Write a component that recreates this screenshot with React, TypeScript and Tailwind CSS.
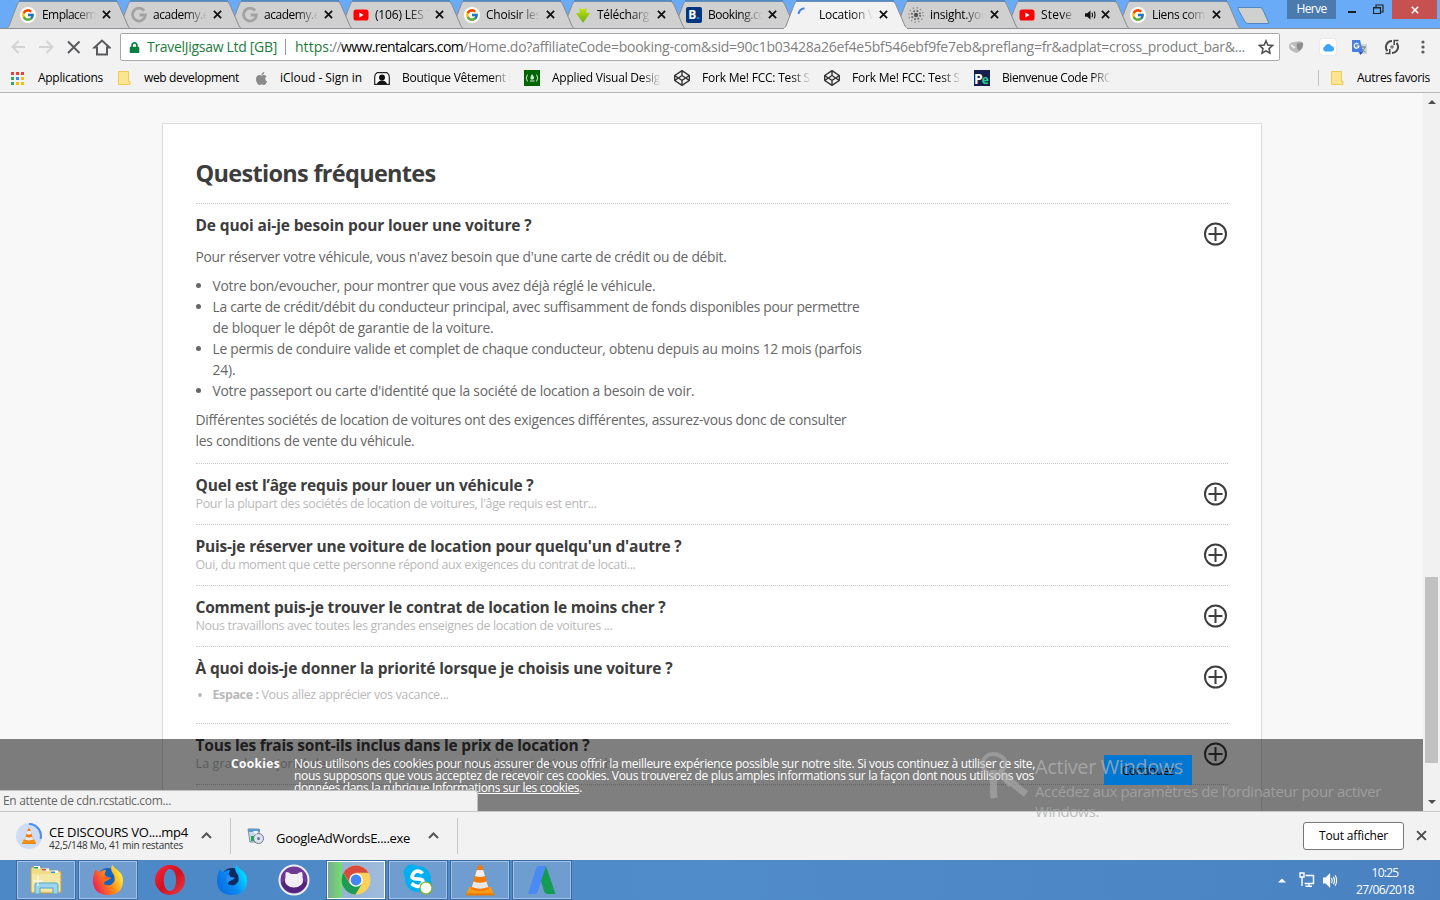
import { useLayoutEffect, useRef, type ReactNode } from "react";
import { FcGoogle } from "react-icons/fc";
import { FaApple, FaCodepen, FaLock } from "react-icons/fa";

/** A single line of text, tracked so that it fills exactly `w` pixels. */
function Line({ w, className = "", children }: { w: number; className?: string; children: ReactNode }) {
  const ref = useRef<HTMLSpanElement>(null);
  useLayoutEffect(() => {
    const el = ref.current;
    if (!el) return;
    el.style.letterSpacing = "0px";
    const natural = el.getBoundingClientRect().width;
    const count = (el.textContent ?? "").length;
    el.style.letterSpacing = `${(w - natural) / count}px`;
  }, [w]);
  return (
    <span className={`block ${className}`}>
      <span ref={ref} className="inline-block whitespace-pre">
        {children}
      </span>
    </span>
  );
}

function Cross({ size = 9, color = "#111", width = 2 }: { size?: number; color?: string; width?: number }) {
  return (
    <svg width={size} height={size} viewBox="0 0 10 10" stroke={color} strokeWidth={width} fill="none">
      <path d="M1 1 9 9M9 1 1 9" />
    </svg>
  );
}

const GoogleIcon = () => (
  <span className="flex size-4 items-center justify-center rounded-full bg-white">
    <FcGoogle size={14} />
  </span>
);

const GreyG = () => (
  <svg width="16" height="16" viewBox="0 0 16 16" fill="none" stroke="#a2a2a2" strokeWidth="2.8">
    <path d="M13 3.6A6.4 6.4 0 1 0 14.4 8H8.5" />
  </svg>
);

const YouTube = () => (
  <svg width="16" height="16" viewBox="0 0 16 16">
    <rect x="0.5" y="2.5" width="15" height="11" rx="2.6" fill="#f00" />
    <path d="M6.4 5.6v4.8L10.6 8z" fill="#fff" />
  </svg>
);

const GreenArrow = () => (
  <svg width="16" height="16" viewBox="0 0 16 16">
    <defs>
      <linearGradient id="ga" x1="0" y1="0" x2="0" y2="1">
        <stop offset="0" stopColor="#c2e418" />
        <stop offset="1" stopColor="#6fae0c" />
      </linearGradient>
    </defs>
    <path d="M4.500 1h1.500v1h4V1h1.500v5h3.700L8 15.800.8 6h3.700z" fill="url(#ga)" />
  </svg>
);

const Booking = () => (
  <span className="flex size-4 items-center justify-center rounded-[2px] bg-[#003580] text-[12px] leading-none font-bold text-white">
    B<span className="text-[#00a2e8]">.</span>
  </span>
);

const Spinner = () => (
  <svg width="16" height="16" viewBox="0 0 16 16" fill="none" stroke="#4285f4" strokeWidth="2">
    <path d="M1.5 7A7 7 0 0 1 7.500 1.200" />
  </svg>
);

const Insight = () => (
  <svg width="16" height="16" viewBox="0 0 16 16" fill="#777">
    <circle cx="8" cy="8" r="2.200" fill="#555" />
    <circle cx="8" cy="8" r="4.200" fill="none" stroke="#6f6f6f" strokeWidth="2" strokeDasharray="1.700 1.600" />
    <circle cx="8" cy="8" r="7.200" fill="none" stroke="#909090" strokeWidth="1.400" strokeDasharray="1.400 2.400" />
  </svg>
);

const Speaker = () => (
  <svg width="11" height="10" viewBox="0 0 12 11" fill="#111">
    <path d="M0 3.500h2.500L6 .5v10l-3.500-3H0z" />
    <path d="M7.500 3q1.500 2.500 0 5M10 1.700q2 3.800 0 7.600" fill="none" stroke="#111" strokeWidth="1.200" />
  </svg>
);

type TabData = { icon: ReactNode; title: string; w: number; active?: boolean; z: string; audio?: boolean };

const tabs: TabData[] = [
  { icon: <GoogleIcon />, title: "Emplacem", w: 54, z: "z-[10]" },
  { icon: <GreyG />, title: "academy.e", w: 56, z: "z-[9]" },
  { icon: <GreyG />, title: "academy.e", w: 56, z: "z-[8]" },
  { icon: <YouTube />, title: "(106) LES T", w: 58, z: "z-[7]" },
  { icon: <GoogleIcon />, title: "Choisir les", w: 55, z: "z-[6]" },
  { icon: <GreenArrow />, title: "Télécharg", w: 52, z: "z-[5]" },
  { icon: <Booking />, title: "Booking.co", w: 57, z: "z-[4]" },
  { icon: <Spinner />, title: "Location V", w: 56, active: true, z: "z-[20]" },
  { icon: <Insight />, title: "insight.you", w: 58, z: "z-[3]" },
  { icon: <YouTube />, title: "Steve J", w: 38, z: "z-[2]", audio: true },
  { icon: <GoogleIcon />, title: "Liens com", w: 53, z: "z-[1]" },
];

function Tab({ tab }: { tab: TabData }) {
  return (
    <div className={`relative -mr-3 h-[29px] w-[123px] shrink-0 ${tab.z}`}>
      <svg className="absolute inset-0" width="123" height="29" viewBox="0 0 123 29">
        <path
          d="M0 28.500 2 26 10 5Q11.500 1 13 1H108Q110.500 1 112 5L121 26 123 28.500Z"
          fill={tab.active ? "#f2f2f2" : "#d0d0d0"}
          stroke="#8a8d91"
          strokeWidth="1"
        />
        <path d="M12 1H110" stroke="#4a83bf" strokeWidth="1.500" />
        {tab.active && <path d="M0 28.500H123" stroke="#f2f2f2" strokeWidth="1.500" />}
      </svg>
      <div className="relative flex h-[29px] items-center pl-[13px] pb-px pt-px">
        {tab.icon}
        <div
          className={`ml-[6px] overflow-hidden [mask-image:linear-gradient(to_right,black_60%,transparent)] ${
            tab.audio ? "w-[34px]" : "w-[54px]"
          }`}
        >
          <Line w={tab.w}>{tab.title}</Line>
        </div>
        {tab.audio && (
          <span className="ml-[10px] flex w-[11px]">
            <Speaker />
          </span>
        )}
        <span className={tab.audio ? "ml-[5px]" : "ml-[6px]"}>
          <Cross />
        </span>
      </div>
    </div>
  );
}

function TabStrip() {
  return (
    <div className="relative flex h-[29px] border-b border-[#8a8d91] bg-[#6aabf7] pl-[7px] text-[12px]">
      {tabs.map((t, i) => (
        <Tab key={i} tab={t} />
      ))}
      <svg className="mt-[6px] ml-[8px] shrink-0" width="36" height="19" viewBox="0 0 36 19">
        <path d="M2 1.500H24Q26 1.500 27 4L33 17.500H12Q9.500 17.500 8.500 15L2 3Z" fill="#d0d0d0" stroke="#5288bf" />
      </svg>
      <div className="absolute top-0 right-[3px] flex h-[19px] items-center">
        <span className="flex h-[19px] w-[49px] items-center justify-center bg-[#4b7bae] pb-px text-white">
          <Line w={30}>Herve</Line>
        </span>
        <span className="ml-[12px] mt-[5px] h-[2px] w-[8px] bg-[#1d1d1d]" />
        <svg className="ml-[17px]" width="11" height="11" viewBox="0 0 11 11" fill="none" stroke="#222">
          <path d="M.5 3.500H7.500V9.500H.5ZM.5 4H7.500M3 3V1H10V8H8" strokeWidth="1.200" />
        </svg>
        <span className="ml-[8px] flex h-[19px] w-[45px] items-center justify-center bg-[#c75050]">
          <Cross size={8} color="#fff" width={2} />
        </span>
      </div>
    </div>
  );
}

function Toolbar() {
  return (
    <div className="flex h-[35px] items-center pt-px pl-[11px]">
      <svg width="100" height="18" viewBox="0 0 100 18" fill="none" strokeWidth="2" className="shrink-0">
        <path d="M14 9H1.500M7.500 3 1.500 9 7.500 15" stroke="#d3d3d5" />
        <path d="M28 9H41M35.500 3 41.500 9 35.500 15" stroke="#d3d3d5" />
        <path d="M57 3.500 68.500 15M68.500 3.500 57 15" stroke="#5a5a5e" />
        <path d="M83.500 9.500 91 2.500 98.500 9.500H96V16.500H86V9.500Z" stroke="#5a5a5e" />
      </svg>
      <div className="ml-[9px] flex h-[28px] w-[1160px] shrink-0 items-center rounded-[2px] border border-[#a9a9a9] bg-white pl-[8px] text-[14px] leading-[26px]">
        <FaLock size={11} className="text-[#0b8043]" />
        <Line w={130} className="ml-[7px] text-[#1c7c3c]">
          TravelJigsaw Ltd [GB]
        </Line>
        <span className="ml-[8px] mr-[9px] h-[16px] w-px bg-[#999]" />
        <Line w={34} className="text-[#1c7c3c]">
          https
        </Line>
        <Line w={12} className="text-[#808080]">
          ://
        </Line>
        <Line w={122} className="text-black">
          www.rentalcars.com
        </Line>
        <Line w={782} className="text-[#808080]">
          /Home.do?affiliateCode=booking-com&sid=90c1b03428a26ef4e5bf546ebf9fe7eb&preflang=fr&adplat=cross_product_bar&...
        </Line>
        <svg className="ml-[13px] shrink-0" width="16" height="16" viewBox="0 0 16 16" fill="none" stroke="#4b4b4f" strokeWidth="1.500">
          <path d="M8 1.800 9.800 6.100 14.500 6.500 11 9.600 12 14.200 8 11.800 4 14.200 5 9.600 1.500 6.500 6.200 6.100Z" />
        </svg>
      </div>
      <svg className="ml-[8px] shrink-0" width="17" height="16" viewBox="0 0 17 16">
        <path d="M1 6Q3 2.500 7 3 11 1.500 15 3.500 16.500 8 12 12L9 14Q3 12.500 1 9Z" fill="#bcbcbc" />
        <path d="M9 4.500Q13 2.500 15 4.500 15 9 11 12 8 9 9 4.500" fill="#8d8d8d" />
        <path d="M3 6 7 9" stroke="#ececec" strokeWidth="2" />
      </svg>
      <span className="ml-[15px] flex size-[16px] shrink-0 items-center justify-center rounded-[2px] bg-white shadow-[0_0_1px_#aaa]">
        <svg width="13" height="9" viewBox="0 0 13 9">
          <path d="M3 8.500a2.700 2.700 0 0 1-.3-5A3.800 3.800 0 0 1 9.600 3 2.800 2.800 0 0 1 10 8.500Z" fill="#3fa5f8" />
        </svg>
      </span>
      <svg className="ml-[15px] shrink-0" width="17" height="17" viewBox="0 0 17 17">
        <rect x="7" y="5" width="9" height="10" fill="#d5d5d5" />
        <path d="M9 8h6M12 7v1.500M14 8q-1 4-4 5M10.500 9.500q1 2.500 4 3.500" stroke="#6c8290" fill="none" />
        <path d="M1 1h8l3 12H2a1 1 0 0 1-1-1Z" fill="#4a7fe0" />
        <path d="m8 13 4 0-2.500 3Z" fill="#2c50ae" />
        <path d="M7.400 5.200A2.400 2.400 0 1 0 8 7H5.700" stroke="#fff" fill="none" strokeWidth="1.200" />
      </svg>
      <svg className="ml-[16px] shrink-0" width="16" height="16" viewBox="0 0 16 16" fill="none" stroke="#48484c" strokeWidth="2">
        <path d="M8 2A6 6 0 0 0 3.500 12M8 14A6 6 0 0 0 12.500 4" />
        <path d="M5.800 10V14.500H1.500M10.200 6V1.500H14.500" strokeWidth="1.500" />
        <circle cx="8" cy="8" r="1.800" fill="#777" stroke="none" />
      </svg>
      <svg className="ml-[21px] shrink-0" width="4" height="14" viewBox="0 0 4 14" fill="#5a5a5e">
        <circle cx="2" cy="2" r="1.600" />
        <circle cx="2" cy="7" r="1.600" />
        <circle cx="2" cy="12" r="1.600" />
      </svg>
    </div>
  );
}

const AppsGrid = () => (
  <svg width="13" height="13" viewBox="0 0 13 13">
    {["#ea4335", "#ea4335", "#ea4335", "#34a853", "#4285f4", "#fbbc05", "#34a853", "#fbbc05", "#fbbc05"].map((c, i) => (
      <rect key={i} x={(i % 3) * 5} y={Math.floor(i / 3) * 5} width="3" height="3" fill={c} />
    ))}
  </svg>
);

const Folder = () => (
  <svg width="13" height="15" viewBox="0 0 13 15">
    <path d="M.5.5H10.500V10.500H12V13.500H.5Z" fill="#ffe48f" stroke="#efca58" />
  </svg>
);

const Person = () => (
  <svg width="16" height="13" viewBox="0 0 16 13">
    <path d="M3 .7H13Q15.300 2 15.300 5V12.300H.7V5Q.7 2 3 .7Z" fill="#fff" stroke="#222" strokeWidth="1.200" />
    <circle cx="8" cy="5.500" r="3" fill="#111" />
    <path d="M3 12Q4 8.500 8 8.500T13 12Z" fill="#111" />
  </svg>
);

const CodeCamp = () => (
  <svg width="16" height="16" viewBox="0 0 16 16" fill="none" stroke="#cfe6cf">
    <rect width="16" height="16" fill="#006400" stroke="none" />
    <path d="M3.500 4.500Q1 8 3.500 11.500M12.500 4.500Q15 8 12.500 11.500M6 11H10.500" />
    <path d="M8 4Q10.500 7 10 8.500L9 9.500H7Q5.500 8 8 4Z" fill="#cfe6cf" stroke="none" />
  </svg>
);

const Pe = () => (
  <span className="flex size-4 items-end overflow-hidden bg-[#17204d] text-[14px] leading-[15px] font-bold text-white">
    P<span className="-ml-px text-[12px] leading-[12px] text-[#23d18b]">e</span>
  </span>
);

const Pen = () => <FaCodepen size={16} color="#333" />;

const bookmarks: { icon: ReactNode; label: string; w: number; slot: string; gap: string; fade?: boolean }[] = [
  { icon: <AppsGrid />, label: "Applications", w: 65, slot: "w-[107px]", gap: "w-[27px]" },
  { icon: <Folder />, label: "web development", w: 95, slot: "w-[136px]", gap: "w-[26px]" },
  { icon: <FaApple size={15} color="#8b8b8b" />, label: "iCloud - Sign in", w: 82, slot: "w-[120px]", gap: "w-[26px]" },
  { icon: <Person />, label: "Boutique Vêtement E", w: 113, slot: "w-[150px]", gap: "w-[28px]", fade: true },
  { icon: <CodeCamp />, label: "Applied Visual Desig", w: 108, slot: "w-[150px]", gap: "w-[28px]", fade: true },
  { icon: <Pen />, label: "Fork Me! FCC: Test S", w: 108, slot: "w-[150px]", gap: "w-[28px]", fade: true },
  { icon: <Pen />, label: "Fork Me! FCC: Test S", w: 108, slot: "w-[150px]", gap: "w-[28px]", fade: true },
  { icon: <Pe />, label: "Bienvenue Code PRO", w: 111, slot: "w-[150px]", gap: "w-[28px]", fade: true },
];

function Bookmarks() {
  return (
    <div className="flex h-[29px] items-center border-b border-[#b6b6b6] pl-[11px] text-[12px] text-black">
      {bookmarks.map((b, i) => (
        <div key={i} className={`flex shrink-0 items-center ${b.slot}`}>
          <span className={`flex shrink-0 ${b.gap}`}>{b.icon}</span>
          <div
            className={
              b.fade
                ? "w-[109px] overflow-hidden [mask-image:linear-gradient(to_right,black_82%,transparent)]"
                : ""
            }
          >
            <Line w={b.w}>{b.label}</Line>
          </div>
        </div>
      ))}
      <span className="ml-auto h-[16px] w-px bg-[#c4c4c4]" />
      <span className="mr-[13px] ml-[12px]">
        <Folder />
      </span>
      <Line w={73} className="mr-[10px]">
        Autres favoris
      </Line>
    </div>
  );
}

const Plus = () => (
  <svg className="mt-[18px] ml-auto shrink-0" width="25" height="24" viewBox="0 0 25 24" fill="none" stroke="#3d3d3d" strokeWidth="2">
    <circle cx="12.500" cy="12" r="10.500" />
    <path d="M12.500 5V19M5.500 12H19.500" />
  </svg>
);

function Question({ title, w, children }: { title: string; w: number; children: ReactNode }) {
  return (
    <section className="flex border-t border-dotted border-[#c8c8c8]">
      <div className="-ml-[0.5px] pt-[10px]">
        <h2 className="text-[15.500px] leading-[22px] font-bold text-[#3d3d3d]">
          <Line w={w}>{title}</Line>
        </h2>
        {children}
      </div>
      <Plus />
    </section>
  );
}

function Teaser({ w, children }: { w: number; children: string }) {
  return (
    <p className="-mt-px mb-[11px] text-[12.500px] leading-[18px] text-[#b9b9b9]">
      <Line w={w}>{children}</Line>
    </p>
  );
}

function Faq() {
  return (
    <div className="mt-[30px] ml-[162px] h-[900px] w-[1100px] border border-[#ddd] bg-white pt-[32px] pr-[33px] pl-[33px]">
      <h1 className="-ml-[0.5px] h-[47px] text-[23.500px] leading-[34px] font-bold text-[#3d3d3d]">
        <Line w={240}>Questions fréquentes</Line>
      </h1>
      <Question w={336} title="De quoi ai-je besoin pour louer une voiture ?">
        <div className="pt-[10px] pb-[12px] text-[13.800px] leading-[21px] text-[#666]">
          <Line w={531}>Pour réserver votre véhicule, vous n'avez besoin que d'une carte de crédit ou de débit.</Line>
          <ul className="my-[8px] list-disc pl-[17px]">
            <li>
              <Line w={443}>Votre bon/evoucher, pour montrer que vous avez déjà réglé le véhicule.</Line>
            </li>
            <li>
              <Line w={647}>La carte de crédit/débit du conducteur principal, avec suffisamment de fonds disponibles pour permettre</Line>
              <Line w={281}>de bloquer le dépôt de garantie de la voiture.</Line>
            </li>
            <li>
              <Line w={649}>Le permis de conduire valide et complet de chaque conducteur, obtenu depuis au moins 12 mois (parfois</Line>
              <Line w={23}>24).</Line>
            </li>
            <li>
              <Line w={482}>Votre passeport ou carte d'identité que la société de location a besoin de voir.</Line>
            </li>
          </ul>
          <Line w={651}>Différentes sociétés de location de voitures ont des exigences différentes, assurez-vous donc de consulter</Line>
          <Line w={219}>les conditions de vente du véhicule.</Line>
        </div>
      </Question>
      <Question w={338} title="Quel est l’âge requis pour louer un véhicule ?">
        <Teaser w={401}>Pour la plupart des sociétés de location de voitures, l'âge requis est entr...</Teaser>
      </Question>
      <Question w={486} title="Puis-je réserver une voiture de location pour quelqu'un d'autre ?">
        <Teaser w={440}>Oui, du moment que cette personne répond aux exigences du contrat de locati...</Teaser>
      </Question>
      <Question w={470} title="Comment puis-je trouver le contrat de location le moins cher ?">
        <Teaser w={417}>Nous travaillons avec toutes les grandes enseignes de location de voitures ...</Teaser>
      </Question>
      <Question w={477} title="À quoi dois-je donner la priorité lorsque je choisis une voiture ?">
        <ul className="mt-[7px] mb-[19px] list-disc pl-[17px] text-[12.500px] leading-[18px] text-[#b9b9b9]">
          <li>
            <span className="flex">
              <Line w={49} className="font-bold">
                {"Espace : "}
              </Line>
              <Line w={187}>Vous allez apprécier vos vacance...</Line>
            </span>
          </li>
        </ul>
      </Question>
      <Question w={394} title="Tous les frais sont-ils inclus dans le prix de location ?">
        <Teaser w={427}>La grande majorité de nos locations comprennent la protection vol, ch...</Teaser>
      </Question>
      <div className="border-t border-dotted border-[#c8c8c8]" />
    </div>
  );
}

function CookieBar() {
  return (
    <div className="absolute right-0 bottom-0 left-0 flex h-[72px] bg-black/50 pt-[19px] pl-[231px] text-[12px] leading-[12px] text-white">
      <Line w={49} className="font-bold">
        Cookies
      </Line>
      <p className="ml-[14px] w-[810px] font-medium">
        <Line w={741}>Nous utilisons des cookies pour nous assurer de vous offrir la meilleure expérience possible sur notre site. Si vous continuez à utiliser ce site,</Line>
        <Line w={740}>nous supposons que vous acceptez de recevoir ces cookies. Vous trouverez de plus amples informations sur la façon dont nous utilisons vos</Line>
        <Line w={288}>
          données dans la rubrique <u>Informations sur les cookies</u>.
        </Line>
      </p>
      <button className="-mt-[3px] flex h-[30px] w-[88px] items-center justify-center bg-[#0077d2] pt-[2px] text-black">
        <Line w={52}>Continuez</Line>
      </button>
    </div>
  );
}

function Page() {
  return (
    <div className="relative flex h-[718px]">
      <main className="relative w-[1423px] overflow-hidden bg-[#f8f8f8]">
        <Faq />
        <CookieBar />
      </main>
      <div className="flex w-[17px] flex-col items-center bg-[#f1f1f1] py-[7px]">
        <svg width="8" height="4" viewBox="0 0 8 4" fill="#505050">
          <path d="M0 4 4 0 8 4Z" />
        </svg>
        <span className="mt-[473px] mb-auto h-[186px] w-[13px] bg-[#c1c1c1]" />
        <svg width="8" height="4" viewBox="0 0 8 4" fill="#505050">
          <path d="M0 0 4 4 8 0Z" />
        </svg>
      </div>
      <div className="absolute bottom-0 left-0 h-[21px] w-[478px] rounded-tr-[3px] border-t border-r border-[#c0c0c0] bg-[#f2f2f2] pl-[3px] text-[12px] leading-[20px] text-[#666]">
        <Line w={168}>En attente de cdn.rcstatic.com...</Line>
      </div>
    </div>
  );
}

function Cone({ size }: { size: number }) {
  return (
    <svg width={size} height={size} viewBox="0 0 30 32">
      <path d="M4 23 26 23 29 31H1Z" fill="#f59a16" />
      <path d="M1 29.500H29V31.500H1Z" fill="#e67700" />
      <path d="M13 1.500Q15 .5 17 1.500L24 25Q15 29 6 25Z" fill="#f17a0a" />
      <path d="M11.800 6 18.200 6 20 12Q15 14 10 12Z" fill="#eee" />
      <path d="M8.500 17.500Q15 20 21.500 17.500L23.300 23Q15 26.500 6.800 23Z" fill="#e8e8e8" />
    </svg>
  );
}

const Chevron = () => (
  <svg width="11" height="7" viewBox="0 0 11 7" fill="none" stroke="#555" strokeWidth="2">
    <path d="M1 6 5.500 1.500 10 6" />
  </svg>
);

function Downloads() {
  return (
    <div className="flex h-[49px] items-center border-t border-[#c6c6c6] bg-[#f2f2f2] text-black">
      <span className="relative ml-[16px] flex size-[26px] items-center justify-center rounded-full bg-[#cfddf4]">
        <Cone size={16} />
        <svg className="absolute inset-0" width="26" height="26" viewBox="0 0 26 26" fill="none" stroke="#4a8af4" strokeWidth="2">
          <path d="M13 1A12 12 0 0 1 24.500 16" />
        </svg>
      </span>
      <div className="ml-[7px] w-[152px] pt-[3px]">
        <Line w={139} className="text-[13px] leading-[15px]">
          CE DISCOURS VO....mp4
        </Line>
        <Line w={134} className="text-[10px] leading-[11px] text-[#333]">
          42,5/148 Mo, 41 min restantes
        </Line>
      </div>
      <span className="-mt-px">
        <Chevron />
      </span>
      <span className="ml-[18px] h-[36px] w-px bg-[#c6c6c6]" />
      <svg className="ml-[16px]" width="18" height="18" viewBox="0 0 18 18">
        <path d="M1 2H12V15H3Z" fill="#c9d9ea" stroke="#7890a8" />
        <path d="M1 2H13V5H1Z" fill="#5b9bd0" />
        <circle cx="11.500" cy="11.500" r="5" fill="#dde3ee" stroke="#6b778c" />
        <circle cx="11.500" cy="11.500" r="1.500" fill="#6277a5" />
        <path d="M4 9h3v5H4Z" fill="#2aa455" />
        <path d="M6 4h5L9 8Z" fill="#f5f5f5" />
      </svg>
      <Line w={134} className="ml-[11px] pt-[4px] text-[13px] leading-[18px]">
        GoogleAdWordsE....exe
      </Line>
      <span className="-mt-px ml-[18px]">
        <Chevron />
      </span>
      <span className="ml-[18px] h-[36px] w-px bg-[#c6c6c6]" />
      <button className="ml-auto flex h-[28px] w-[101px] items-center justify-center rounded-[3px] border border-[#777] bg-white pb-px text-[12px]">
        <Line w={69}>Tout afficher</Line>
      </button>
      <span className="mr-[13px] ml-[12px] -mt-[2px]">
        <Cross size={11} color="#4d4d4d" width={1.8} />
      </span>
    </div>
  );
}

const Explorer = () => (
  <svg width="34" height="32" viewBox="0 0 34 32">
    <path d="M2 5Q2 3 4 3H11L13 5H20L22 7H30Q32 7 32 9V27Q32 29 30 29H4Q2 29 2 27Z" fill="#f1dc89" stroke="#c2a54e" />
    <path d="M5 2H11V5H5Z" fill="#fff" />
    <path d="M5 3H9V4.500H5Z" fill="#17a53a" />
    <path d="M13 4.500H20V7H13Z" fill="#fff" />
    <path d="M13 5H17V6.500H13Z" fill="#d6442c" />
    <path d="M22 6.500H29V9H22Z" fill="#fff" />
    <path d="M22 7.500H26V9H22Z" fill="#2d8fd8" />
    <path d="M3 10H31V27H3Z" fill="#f6e7a4" />
    <path d="M6 30V21Q6 19 8 19H27Q29 19 29 21V30H24V24H11V30Z" fill="#9bd6ee" stroke="#58a3c7" />
    <path d="M9 12V22M4 17H14" stroke="#fff" />
  </svg>
);

function Fox({ id, a, b, c, globe, core }: { id: string; a: string; b: string; c: string; globe: string; core: string }) {
  return (
    <svg width="32" height="32" viewBox="0 0 32 32">
      <defs>
        <linearGradient id={id} x1="1" y1="0.100" x2="0" y2="0.600">
          <stop offset="0.150" stopColor={a} />
          <stop offset="0.550" stopColor={b} />
          <stop offset="1" stopColor={c} />
        </linearGradient>
      </defs>
      <circle cx="16" cy="15" r="11" fill={globe} />
      <path
        d="M4 5 7 8.500Q10 5.500 14 6L12.500 10 14.500 13 19 14 15 16.500Q11 17 12 20 18 23.500 22 18 24 13 20 8 18 4 20.500 1 22 4 26 6.500 31.500 11 31 17.500 30 31 16 31 2 30.500 1 18 .8 10 4 5Z"
        fill={`url(#${id})`}
      />
      <path d="M12.500 10 14.500 13 19 14 15 16.500Q12 17 12 20 9 15 12.500 10Z" fill={core} />
    </svg>
  );
}

const Opera = () => (
  <svg width="32" height="32" viewBox="0 0 32 32">
    <defs>
      <linearGradient id="op" x1="0" y1="0" x2="1" y2="1">
        <stop offset="0" stopColor="#ff2739" />
        <stop offset="0.500" stopColor="#d2101f" />
        <stop offset="1" stopColor="#e84045" />
      </linearGradient>
    </defs>
    <path fillRule="evenodd" fill="url(#op)" d="M16 1A15 15 0 1 1 16 31 15 15 0 0 1 16 1ZM16 5C8 5 7.500 27 16 27S24 5 16 5Z" />
  </svg>
);

const Github = () => (
  <svg width="32" height="32" viewBox="0 0 32 32">
    <circle cx="16" cy="16" r="15.500" fill="#eee" />
    <circle cx="16" cy="16" r="13.500" fill="#6e3a96" />
    <path d="M3 19A13.500 13.500 0 0 0 29 19L24 16H8Z" fill="#52257c" />
    <path d="M8 8Q11 8 13 10H19Q21 8 24 8 25 10 24.500 13 26 18 23 21 20 23.500 16 23.500T9 21Q6 18 7.500 13 7 10 8 8Z" fill="#f1eef5" />
  </svg>
);

const ChromeLogo = () => (
  <svg width="32" height="32" viewBox="0 0 32 32">
    <circle cx="16" cy="16" r="14.500" fill="#fdd05a" />
    <path d="M16 8.750H28.500A14.500 14.500 0 0 0 3.440 8.750L10 19Z" fill="#d84a3b" />
    <path d="M3.440 8.750 10 20 22 19.500 15.500 30.500A14.500 14.500 0 0 1 3.440 8.750Z" fill="#1d9b57" />
    <circle cx="16" cy="16" r="6.800" fill="#fff" />
    <circle cx="16" cy="16" r="5.400" fill="#4285f4" />
  </svg>
);

const Skype = () => (
  <svg width="32" height="32" viewBox="0 0 32 32">
    <circle cx="10" cy="9" r="8.500" fill="#00aff0" />
    <circle cx="16" cy="15" r="13" fill="#00aff0" />
    <circle cx="22" cy="21" r="8" fill="#00aff0" />
    <path d="M20.500 9.500Q18.500 7 15.500 7T10.500 11 15.500 15 20.500 19 15.500 22.500 9.500 19.500" stroke="#fff" strokeWidth="3.600" fill="none" />
    <circle cx="24" cy="24" r="6" fill="#fff" stroke="#7cb518" strokeWidth="1.200" />
  </svg>
);

const Ads = () => (
  <svg width="32" height="32" viewBox="0 0 32 32">
    <path d="M11 2H20L12 27Q11 30 8 30H2Z" fill="#4a8af5" />
    <path d="M20 2 29.500 30H22Q19 30 18 27L15 17Z" fill="#169b57" />
  </svg>
);

const tasks: { icon: ReactNode; style: "open" | "idle" | "current" }[] = [
  { icon: <Explorer />, style: "open" },
  { icon: <Fox id="fox-warm" a="#ffe83c" b="#ff8a16" c="#f0254f" globe="#1565c0" core="#ff6a1e" />, style: "open" },
  { icon: <Opera />, style: "idle" },
  { icon: <Fox id="fox-blue" a="#00d8ff" b="#0a8cf5" c="#0a6fe0" globe="#0b2b63" core="#2a8cf0" />, style: "idle" },
  { icon: <Github />, style: "idle" },
  { icon: <ChromeLogo />, style: "current" },
  { icon: <Skype />, style: "open" },
  { icon: <Cone size={32} />, style: "open" },
  { icon: <Ads />, style: "open" },
];

const taskStyles = {
  open: "border-[#a3c1e2] bg-[#709dcf] outline outline-[#3a6ba5]",
  idle: "border-transparent",
  current:
    "border-white bg-[linear-gradient(to_right,#7fa88f_0,#6fe070_24%,#94b3d6_25%,#9fbcdc_100%)] outline outline-[#3a6ba5]",
};

function Taskbar() {
  return (
    <div className="flex h-[40px] items-center gap-[4px] bg-[linear-gradient(to_right,#4c87c6,#508cc9_50%,#4a82c1)] pl-[17px] text-white">
      {tasks.map((t, i) => (
        <span key={i} className={`flex h-[38px] w-[58px] items-center justify-center border ${taskStyles[t.style]}`}>
          {t.icon}
        </span>
      ))}
      <div className="mr-[26px] ml-auto flex items-center">
        <svg width="8" height="5" viewBox="0 0 8 5" fill="#fff">
          <path d="M0 4.500 4 .5 8 4.500Z" />
        </svg>
        <svg className="ml-[13px]" width="16" height="16" viewBox="0 0 16 16" fill="none" stroke="#fff" strokeWidth="1.400">
          <path d="M1 1H5V5H1ZM3 5V14M6.500 3.500H14.500V11.500H5.500M10 11.500V14M6.500 14.200H13" />
        </svg>
        <svg className="ml-[8px]" width="15" height="15" viewBox="0 0 16 16" fill="none" stroke="#fff" strokeWidth="1.200">
          <path d="M.5 5.500H3L7 1.500V14.500L3 10.500H.5Z" fill="#fff" />
          <path d="M9 5.500Q10.500 8 9 10.500M11 4Q13.500 8 11 12M13 2.500Q16 8 13 13.500" />
        </svg>
        <div className="ml-[18px] flex flex-col items-center pt-px text-[12px] leading-[17px]">
          <Line w={27}>10:25</Line>
          <Line w={58}>27/06/2018</Line>
        </div>
      </div>
    </div>
  );
}

function Watermark() {
  return (
    <div className="pointer-events-none absolute top-[750px] left-[979px] z-30 flex text-[#b2b2b2]/75">
      <svg width="50" height="51" viewBox="0 0 50 51" fill="none" stroke="currentColor" className="opacity-70">
        <path d="M11 24Q1 19 4.500 10 9 2 18 4.500 27 7 26 15 25 21 20 22" strokeWidth="4" />
        <path d="M14.500 20V44L15.500 48M19 21 43 41 47 44" strokeWidth="7" />
        <path d="M25 29 31 36" strokeWidth="4" />
      </svg>
      <div className="ml-[6px]">
        <Line w={148} className="pt-[2px] text-[20px] leading-[30px]">
          Activer Windows
        </Line>
        <Line w={346} className="-mt-px text-[15px] leading-[20px] text-[#aaa]/75">
          Accédez aux paramètres de l’ordinateur pour activer
        </Line>
        <Line w={64} className="text-[15px] leading-[20px] text-[#aaa]/75">
          Windows.
        </Line>
      </div>
    </div>
  );
}

export default function App() {
  return (
    <div className="relative flex h-[900px] w-[1440px] flex-col overflow-hidden bg-[#f2f2f2] font-['Open_Sans','Noto_Sans',sans-serif]">
      <TabStrip />
      <Toolbar />
      <Bookmarks />
      <Page />
      <Downloads />
      <Taskbar />
      <Watermark />
    </div>
  );
}
